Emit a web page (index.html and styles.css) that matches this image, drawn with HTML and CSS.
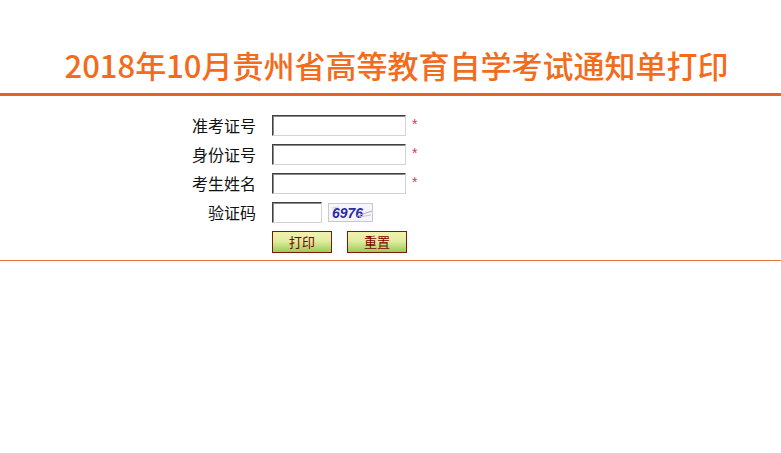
FILE: index.html
```html
<!DOCTYPE html>
<html lang="zh-CN">
<head>
<meta charset="utf-8">
<title>2018年10月贵州省高等教育自学考试通知单打印</title>
<link rel="stylesheet" href="styles.css">
</head>
<body>
<div class="header">
  <h1 class="title">2018年10月贵州省高等教育自学考试通知单打印</h1>
</div>
<form class="form">
  <div class="grid">
    <label class="label">准考证号</label>
    <div class="field"><input class="txt" type="text"><span class="star">*</span></div>
    <label class="label">身份证号</label>
    <div class="field"><input class="txt" type="text"><span class="star">*</span></div>
    <label class="label">考生姓名</label>
    <div class="field"><input class="txt" type="text"><span class="star">*</span></div>
    <label class="label">验证码</label>
    <div class="field">
      <input class="txt code" type="text">
      <span class="captcha">
        <span class="captcha-text">6976</span>
        <svg class="noise" width="44" height="18" viewBox="0 0 44 18">
          <path d="M28 12 L43 7" stroke="#b0a8c8" stroke-width="1" fill="none"/>
          <path d="M30 13 L42 11" stroke="#c8c0d8" stroke-width="1" fill="none"/>
          <path d="M3 4 L10 3" stroke="#d8d0e0" stroke-width="1" fill="none"/>
        </svg>
      </span>
    </div>
    <span class="label"></span>
    <div class="field buttons">
      <button class="btn" type="button">打印</button>
      <button class="btn" type="reset">重置</button>
    </div>
  </div>
</form>
</body>
</html>
```
FILE: styles.css
```css
html, body {
  margin: 0;
  padding: 0;
  background: #ffffff;
}
body {
  font-family: "Noto Sans CJK SC", "Liberation Sans", sans-serif;
  color: #000;
}
.header {
  padding-top: 44px;
  padding-bottom: 7px;
  border-bottom: 3px solid #e0652a;
}
.title {
  margin: 0;
  padding-left: 12px;
  text-align: center;
  font-size: 31px;
  line-height: 42px;
  font-weight: 500;
  color: #f26c1c;
  letter-spacing: 0;
}
.form {
  margin: 0;
  padding-top: 19px;
  padding-bottom: 8px;
  border-bottom: 1px solid #e27b35;
}
.grid {
  display: grid;
  grid-template-columns: 256px auto;
  grid-auto-rows: 21px;
  column-gap: 16px;
  row-gap: 8px;
  align-items: center;
}
.grid .buttons {
  margin-top: 1px;
}
.label {
  text-align: right;
  font-size: 16px;
  line-height: 21px;
  color: #111;
}
.field {
  display: flex;
  align-items: center;
  height: 21px;
}
.txt {
  box-sizing: border-box;
  width: 134px;
  height: 21px;
  margin: 0;
  padding: 0 2px;
  border-style: solid;
  border-width: 1px;
  border-color: #404040 #d4d4d4 #d4d4d4 #404040;
  box-shadow: inset 1px 1px 0 #8a8a8a;
  background: #fff;
  font-size: 13px;
}
.txt.code {
  width: 50px;
}
.star {
  align-self: flex-start;
  margin-left: 6px;
  color: #e0305a;
  font-family: "Liberation Sans", sans-serif;
  font-size: 14px;
  line-height: 14px;
  padding-top: 2px;
}
.captcha {
  position: relative;
  box-sizing: border-box;
  display: inline-flex;
  align-items: center;
  width: 45px;
  height: 19px;
  margin-left: 6px;
  border: 1px solid #c8c8d0;
  background: #f6f6fa;
  overflow: hidden;
}
.captcha-text {
  padding-left: 3px;
  font-family: "Liberation Sans", sans-serif;
  font-style: italic;
  font-weight: bold;
  font-size: 14px;
  color: #2a2aa8;
  letter-spacing: 0;
}
.noise {
  position: absolute;
  left: 0;
  top: 0;
}
.buttons {
  gap: 15px;
}
.btn {
  box-sizing: border-box;
  width: 60px;
  height: 22px;
  margin: 0;
  padding: 0;
  border: 1px solid #7a1a08;
  background: linear-gradient(to bottom, #f2f2b0 0%, #e2eca0 45%, #b8dc78 75%, #9acb58 100%);
  color: #800000;
  font-family: "Noto Sans CJK SC", sans-serif;
  font-size: 13px;
  line-height: 20px;
  cursor: pointer;
}
```
